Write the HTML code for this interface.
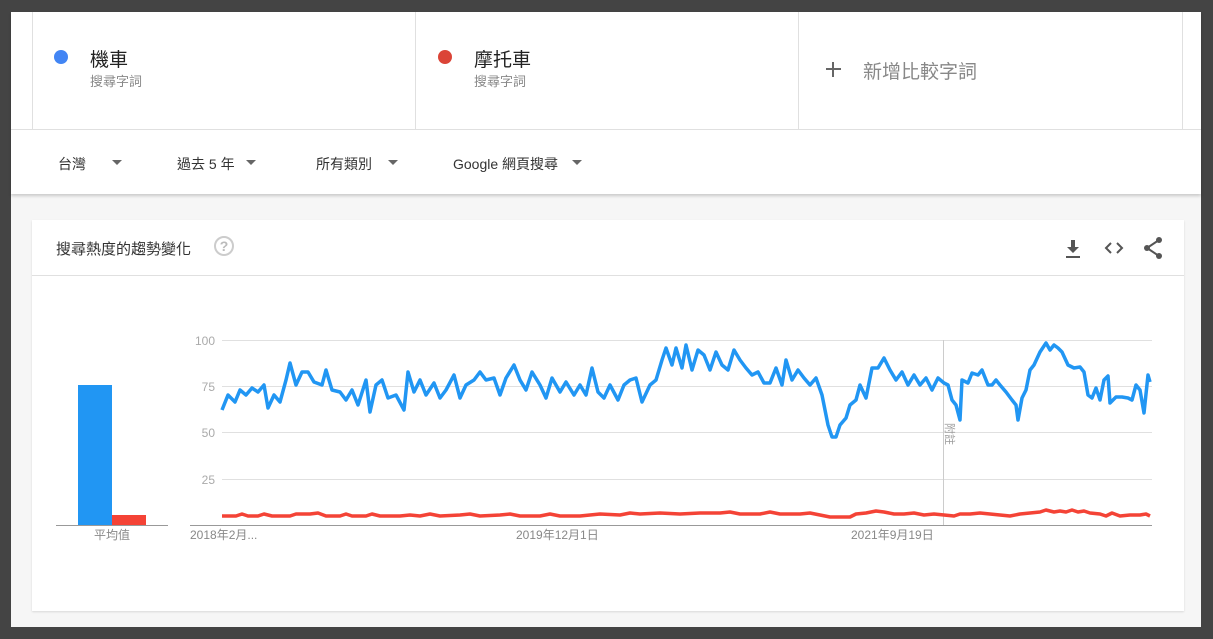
<!DOCTYPE html>
<html><head><meta charset="utf-8">
<style>
*{margin:0;padding:0;box-sizing:border-box}
body{width:1213px;height:639px;background:#444;position:relative;overflow:hidden;font-family:"Liberation Sans","Noto Sans CJK TC",sans-serif}
.page{position:absolute;left:11px;top:12px;width:1190px;height:615px;background:#f6f6f6}
.top{position:absolute;left:0;top:0;width:1190px;height:182px;background:#fff;box-shadow:0 2px 3px rgba(0,0,0,.18)}
.terms{position:absolute;left:0;top:0;width:1190px;height:118px;border-bottom:1px solid #e0e0e0}
.vl{position:absolute;top:0;height:118px;width:1px;background:#e0e0e0}
.dot{position:absolute;width:14px;height:14px;border-radius:50%}
.tn{position:absolute;font-size:19px;color:#222}
.ts{position:absolute;font-size:13px;color:#888}
.filt{position:absolute;top:142px;font-size:14px;color:#333}
.tri{position:absolute;top:148px;width:0;height:0;border-left:5px solid transparent;border-right:5px solid transparent;border-top:5px solid #666}
.card{position:absolute;left:21px;top:208px;width:1152px;height:391px;background:#fff;box-shadow:0 1px 2px rgba(0,0,0,.12)}
</style></head><body>
<div class="page">
 <div class="top">
  <div class="terms">
   <div class="vl" style="left:21px"></div>
   <div class="vl" style="left:404px"></div>
   <div class="vl" style="left:787px"></div>
   <div class="vl" style="left:1171px"></div>
   <div class="dot" style="left:43px;top:38px;background:#4285f4"></div>
   <div class="tn" style="left:79px;top:33px">機車</div>
   <div class="ts" style="left:79px;top:59px">搜尋字詞</div>
   <div class="dot" style="left:427px;top:38px;background:#db4437"></div>
   <div class="tn" style="left:463px;top:33px">摩托車</div>
   <div class="ts" style="left:463px;top:59px">搜尋字詞</div>
   <div style="position:absolute;left:815px;top:56px;width:15px;height:2px;background:#666"></div>
   <div style="position:absolute;left:821px;top:50px;width:2px;height:15px;background:#666"></div>
   <div style="position:absolute;left:852px;top:45px;font-size:19px;color:#888">新增比較字詞</div>
  </div>
  <div class="filt" style="left:47px">台灣</div><div class="tri" style="left:101px"></div>
  <div class="filt" style="left:166px">過去 5 年</div><div class="tri" style="left:235px"></div>
  <div class="filt" style="left:305px">所有類別</div><div class="tri" style="left:377px"></div>
  <div class="filt" style="left:442px">Google 網頁搜尋</div><div class="tri" style="left:561px"></div>
 </div>
 <div class="card">
  <div style="position:absolute;left:24px;top:18px;font-size:15px;color:#333">搜尋熱度的趨勢變化</div>
  <div style="position:absolute;left:182px;top:16px;width:20px;height:20px;border:2px solid #ccc;border-radius:50%;color:#bbb;font-size:14px;font-weight:bold;text-align:center;line-height:17px">?</div>
  <div style="position:absolute;left:0;top:55px;width:1152px;height:1px;background:#e0e0e0"></div>
  <svg style="position:absolute;left:1030px;top:16px" width="120" height="30" viewBox="0 0 120 30">
   <path d="M9 4h4v7h4l-6 6-6-6h4z M4 20h14v2H4z" fill="#555"/>
   <path d="M49 7l-5 5 5 5 M55 7l5 5-5 5" stroke="#555" stroke-width="2" fill="none"/>
   <circle cx="97" cy="4" r="3" fill="#555"/><circle cx="85" cy="12" r="3" fill="#555"/><circle cx="97" cy="20" r="3" fill="#555"/>
   <path d="M97 4L85 12L97 20" stroke="#555" stroke-width="2" fill="none"/>
  </svg>
 </div>
</div>
<svg style="position:absolute;left:0;top:0" width="1213" height="639" viewBox="0 0 1213 639" font-family="Liberation Sans, Noto Sans CJK TC, sans-serif">
 <g stroke="#e0e0e0" stroke-width="1">
  <line x1="222" y1="340.5" x2="1152" y2="340.5"/>
  <line x1="222" y1="386.5" x2="1152" y2="386.5"/>
  <line x1="222" y1="432.5" x2="1152" y2="432.5"/>
  <line x1="222" y1="479.5" x2="1152" y2="479.5"/>
 </g>
 <line x1="943.5" y1="340" x2="943.5" y2="525" stroke="#ccc"/>
 <g font-size="12" fill="#aaa" text-anchor="end">
  <text x="215" y="345">100</text><text x="215" y="391">75</text><text x="215" y="437">50</text><text x="215" y="484">25</text>
 </g>
 <text x="0" y="0" font-size="11" fill="#999" transform="translate(946,423) rotate(90)">附註</text>
 <line x1="56" y1="525.5" x2="168" y2="525.5" stroke="#999"/>
 <line x1="190" y1="525.5" x2="1152" y2="525.5" stroke="#999"/>
 <rect x="78" y="385" width="34" height="140" fill="#2196f3"/>
 <rect x="112" y="515" width="34" height="10" fill="#f44336"/>
 <text x="112" y="539" font-size="12" fill="#888" text-anchor="middle">平均值</text>
 <g font-size="12" fill="#888">
  <text x="190" y="539">2018年2月...</text>
  <text x="516" y="539">2019年12月1日</text>
  <text x="851" y="539">2021年9月19日</text>
 </g>
 <polyline fill="none" stroke="#2196f3" stroke-width="3.5" stroke-linejoin="round" points="222,410 228,395 235,402 240,390 246,395 252,388 258,392 264,385 268,408 274,395 280,402 286,380 290,363 296,385 302,372 308,372 314,382 322,385 326,370 332,390 340,392 346,400 352,390 358,405 366,380 370,412 376,385 382,380 388,398 396,395 404,410 408,372 414,392 420,380 426,395 434,383 440,398 446,390 454,375 460,398 466,385 474,380 480,372 486,380 494,378 500,395 506,378 514,365 520,380 526,390 532,372 540,385 546,398 552,378 560,392 566,382 574,395 580,385 586,395 592,368 598,392 604,398 610,385 618,400 624,385 630,380 636,378 642,402 650,385 656,380 662,360 666,348 672,365 676,348 682,368 686,345 692,370 698,350 704,355 710,370 716,352 722,365 728,370 734,350 740,360 746,368 752,375 758,372 764,383 770,383 776,368 782,385 786,360 792,380 798,370 804,378 810,385 816,378 822,395 828,425 832,437 836,437 840,425 846,418 850,405 856,400 860,385 866,398 872,368 878,368 884,358 890,370 896,380 902,372 908,385 914,375 920,385 926,378 932,390 938,378 944,383 948,385 952,400 956,405 960,420 962,380 968,383 972,373 978,375 982,370 988,385 992,385 996,380 1000,385 1006,392 1012,400 1016,405 1018,420 1022,398 1026,390 1030,370 1034,365 1040,352 1046,343 1050,350 1054,345 1058,348 1062,352 1068,365 1074,368 1080,367 1084,372 1088,395 1092,398 1096,388 1100,400 1104,380 1108,376 1110,403 1116,397 1122,397 1128,398 1132,400 1136,385 1140,390 1144,413 1148,375 1150,382"/>
 <polyline fill="none" stroke="#f44336" stroke-width="3.5" stroke-linejoin="round" points="222,516 236,516 242,514 248,516 258,516 264,514 272,516 290,516 296,514 310,514 318,513 326,516 340,516 346,514 352,516 366,516 372,514 380,516 400,516 410,515 420,516 430,514 440,516 460,515 470,514 480,516 500,515 510,514 520,516 540,516 550,514 560,516 580,516 600,514 620,515 630,513 640,514 660,513 680,514 700,513 720,513 730,512 740,514 760,514 770,512 780,514 800,514 810,513 820,515 830,517 850,517 856,514 866,513 876,511 884,512 894,514 904,514 914,513 924,515 934,514 944,515 954,516 960,514 970,514 980,513 990,514 1000,515 1010,516 1020,514 1030,513 1040,512 1046,510 1054,512 1060,511 1066,512 1072,510 1078,512 1084,511 1090,513 1100,514 1106,516 1112,513 1120,516 1130,515 1140,515 1146,514 1150,516"/>
</svg>
</body></html>
